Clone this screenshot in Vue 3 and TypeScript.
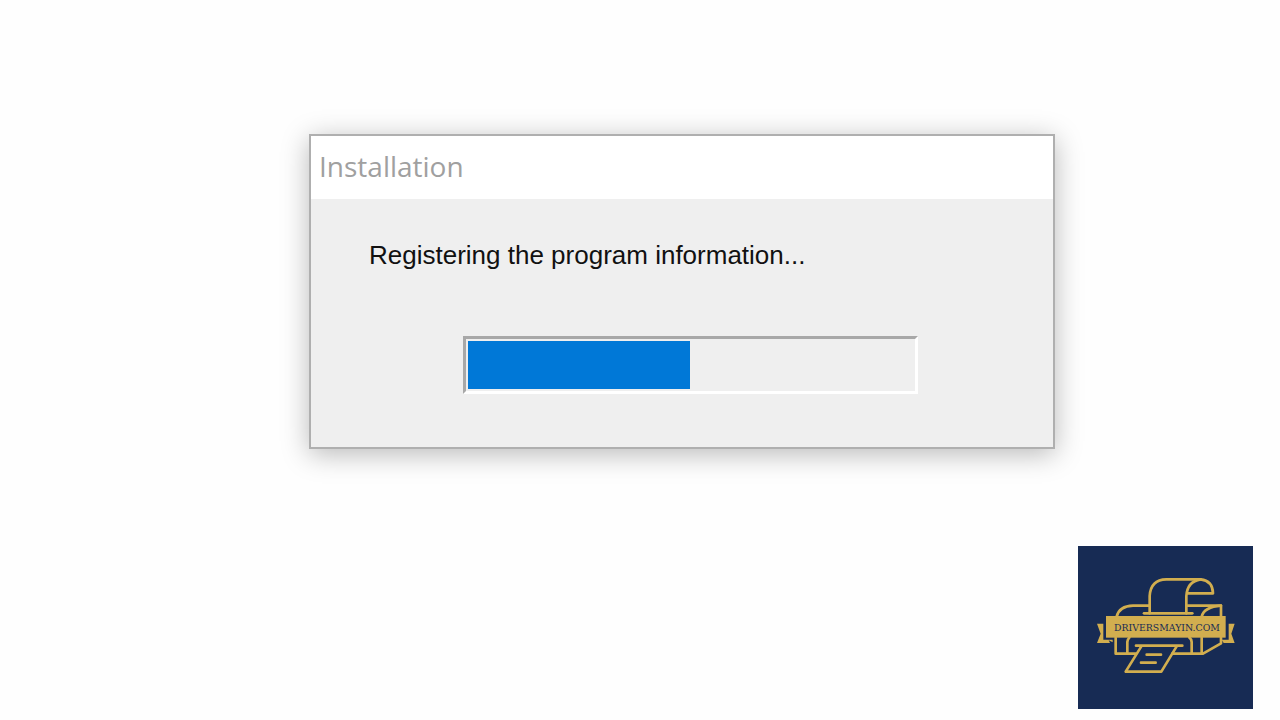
<script setup lang="ts">
import { ref } from 'vue'

const title = ref<string>('Installation')
const status = ref<string>('Registering the program information...')
const progress = ref<number>(50)
</script>

<template>
  <div class="page">
    <main class="stage">
      <section class="dialog" role="dialog" aria-labelledby="dialog-title">
        <header class="titlebar">
          <h1 id="dialog-title">{{ title }}</h1>
        </header>
        <div class="body">
          <label class="status" for="install-progress">{{ status }}</label>
          <progress id="install-progress" class="bar" max="100" :value="progress"></progress>
        </div>
      </section>
    </main>
    <footer class="footer">
      <svg class="logo" viewBox="0 0 525 489" role="img" aria-label="DRIVERSMAYIN.COM">
        <g class="line">
          <!-- paper feed -->
          <path d="M215 202V150Q218 101 265 100H368Q404 104 405 142H329" />
          <path d="M325 202V150Q328 106 368 100" />
          <path d="M198 202H343" />
          <!-- printer body -->
          <path d="M116 212Q124 180 165 179H215" />
          <path d="M329 179H429V212" />
          <path d="M371 212Q378 183 429 179" />
          <path d="M113 275V323H174M148 323V288Q149 279 154 275" />
          <path d="M283 323H375L429 292V275" />
          <path d="M371 275V323M341 323V288Q340 279 334 275" />
          <!-- printed sheet -->
          <path d="M174 299H313" />
          <path d="M190 301L143 377H250L296 301" />
          <path d="M206 326H249M189 350H233" />
        </g>
        <g class="solid">
          <path d="M57 233H76V281H104V289L92 283L96 291H57L68 263Z" />
          <path d="M470 233H452V281H431L437 291H470L460 263Z" />
          <rect x="84" y="210" width="359" height="65" />
        </g>
        <text class="brand" x="267" y="255" text-anchor="middle">DRIVERSMAYIN.COM</text>
      </svg>
    </footer>
  </div>
</template>

<style>
body {
  margin: 0;
  background: #fefefe;
}
</style>

<style scoped>
.page {
  box-sizing: border-box;
  min-height: 100vh;
  display: flex;
  flex-direction: column;
  justify-content: space-between;
  padding: 134px 27px 11px;
}

.stage {
  display: flex;
  justify-content: center;
  padding-left: 84px;
}

.dialog {
  box-sizing: border-box;
  width: 100%;
  max-width: 746px;
  border: 2px solid #afafaf;
  background: #efefef;
  box-shadow: 0 5px 26px rgba(0, 0, 0, 0.28);
}

.titlebar {
  padding: 10px 8px 13px;
  background: #fff;
}

.titlebar h1 {
  margin: 0;
  font: 400 28px/40px "Open Sans", "Noto Sans", sans-serif;
  color: #a0a0a0;
}

.body {
  display: flex;
  flex-direction: column;
  padding: 36px 58px 53px;
}

.status {
  font: 400 26px/40px "Liberation Sans", Arial, sans-serif;
  color: #111;
}

.bar {
  appearance: none;
  box-sizing: border-box;
  align-self: center;
  width: 100%;
  max-width: 455px;
  height: 58px;
  margin: 61px 0 0 16px;
  padding: 2px;
  border: 3px solid;
  border-color: #a8a8a8 #fff #fff #a8a8a8;
  background: #efefef;
}

.bar::-webkit-progress-bar {
  background: #efefef;
}

.bar::-webkit-progress-value {
  background: #0078d7;
}

.footer {
  display: flex;
  justify-content: flex-end;
}

.logo {
  display: block;
  width: 175px;
  height: 163px;
  background: #172b54;
}

.line {
  fill: none;
  stroke: #d2ae4f;
  stroke-width: 8;
  stroke-linecap: round;
  stroke-linejoin: round;
}

.solid {
  fill: #d2ae4f;
}

.brand {
  font: 400 28px "DejaVu Serif", serif;
  fill: #172b54;
}
</style>
